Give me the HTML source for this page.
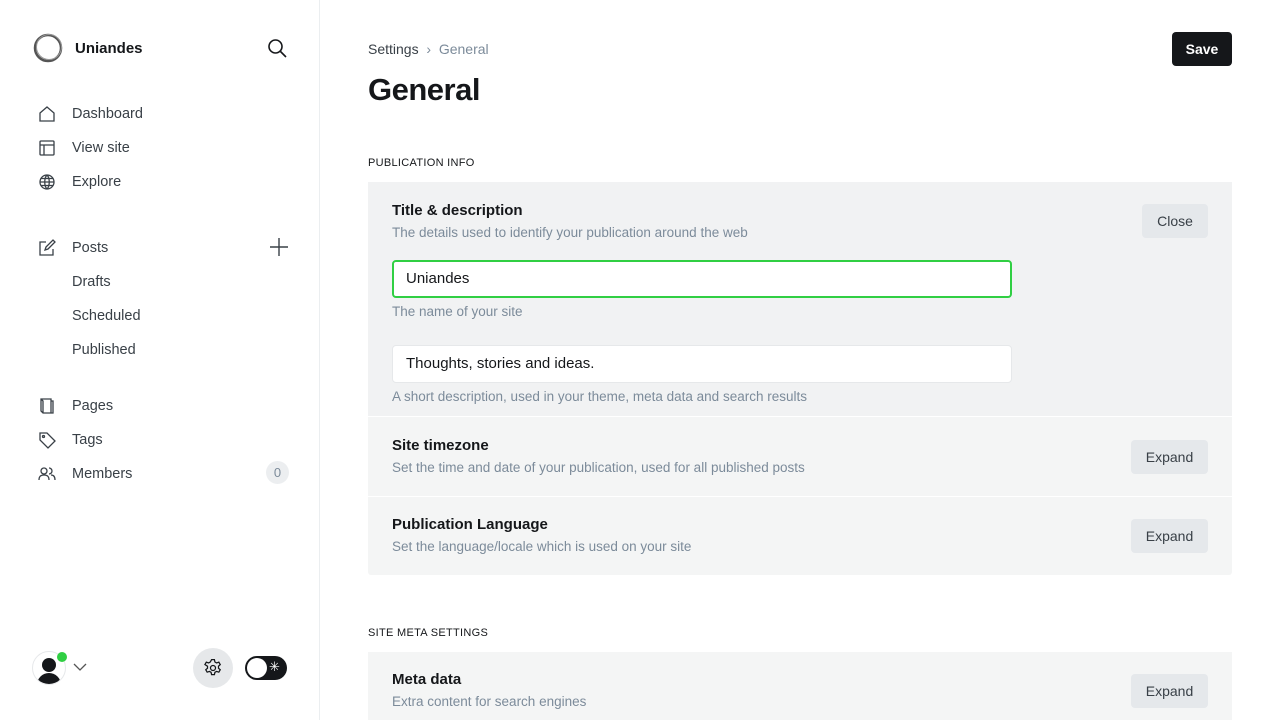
<!DOCTYPE html>
<html><head><meta charset="utf-8">
<style>
*{box-sizing:border-box;margin:0;padding:0}
html,body{width:1280px;height:720px;overflow:hidden}
body{background:#fff;font-family:"Liberation Sans",sans-serif;color:#15171a;position:relative}
.side{position:absolute;left:0;top:0;width:320px;height:720px;border-right:1px solid #ebeef0}
.brand{position:absolute;left:33px;top:33px;display:flex;align-items:center}
.brand span{font-weight:bold;font-size:15px;margin-left:12px}
.nav{position:absolute;left:38px;font-size:14.5px;color:#394047;display:flex;align-items:center}
.nav svg{width:18px;height:18px;margin-right:16px;fill:none;stroke:#394047;stroke-width:1.3}
.sub{position:absolute;left:72px;font-size:14.5px;color:#394047}
.main{position:absolute;left:368px;top:0;width:864px}
.crumb{position:absolute;top:41px;font-size:14px;color:#394047}
.crumb i{font-style:normal;color:#7c8b9a}
h1{position:absolute;top:72px;font-size:31px;font-weight:bold;letter-spacing:-0.5px}
.save{position:absolute;left:804px;top:32px;width:60px;height:34px;background:#15171a;color:#fff;border-radius:4px;font-size:14px;font-weight:bold;text-align:center;line-height:34px}
.sec{position:absolute;font-size:11px;color:#15171a;letter-spacing:0.3px}
.panel{position:absolute;left:0;width:864px;background:#f4f5f5}
.row{position:relative;border-top:1px solid #fff}
.row h3{position:absolute;left:24px;font-size:15px;font-weight:bold;color:#15171a}
.row p{position:absolute;left:24px;font-size:13.5px;color:#7c8b9a}
.btn{position:absolute;right:24px;height:34px;background:#e5e8eb;border-radius:4px;font-size:14px;color:#394047;text-align:center;line-height:34px}
.inp{position:absolute;left:24px;width:620px;height:38px;background:#fff;border-radius:4px;font-size:15px;padding-left:13px;line-height:38px;color:#15171a}
</style></head><body>
<div class="side">
 <div class="brand"><svg width="30" height="30" viewBox="0 0 30 30"><circle cx="15" cy="15" r="13" fill="none" stroke="#555" stroke-width="2.5"/><circle cx="16" cy="14" r="12.5" fill="none" stroke="#999" stroke-width="1"/></svg><span>Uniandes</span></div>
 <svg style="position:absolute;left:267px;top:38px" width="20" height="20" viewBox="0 0 20 20" fill="none" stroke="#15171a" stroke-width="1.6"><circle cx="8.5" cy="8.5" r="6.5"/><path d="M13.5 13.5 19 19"/></svg>
 <div class="nav" style="top:105px"><svg viewBox="0 0 18 18"><path d="M2 8 9 2l7 6v8H2z"/></svg>Dashboard</div>
 <div class="nav" style="top:139px"><svg viewBox="0 0 18 18"><rect x="2" y="2" width="14" height="14" rx="1"/><path d="M2 6h14M6 6v10"/></svg>View site</div>
 <div class="nav" style="top:173px"><svg viewBox="0 0 18 18"><circle cx="9" cy="9" r="7"/><path d="M2 9h14M9 2c-3 3-3 11 0 14M9 2c3 3 3 11 0 14M3 5.5h12M3 12.5h12"/></svg>Explore</div>
 <div class="nav" style="top:239px"><svg viewBox="0 0 18 18"><path d="M8 3H2v13h13v-6M7 11l1-3 7-7 2 2-7 7z"/></svg>Posts</div>
 <svg style="position:absolute;left:270px;top:238px" width="18" height="18" viewBox="0 0 18 18" stroke="#394047" stroke-width="1.4"><path d="M9 0v18M0 9h18"/></svg>
 <div class="sub" style="top:274px">Drafts</div>
 <div class="sub" style="top:308px">Scheduled</div>
 <div class="sub" style="top:342px">Published</div>
 <div class="nav" style="top:397px"><svg viewBox="0 0 18 18"><path d="M3 2h10v14H5l-2-2zM5 16V4l-2-2M13 4h2v12h-2"/></svg>Pages</div>
 <div class="nav" style="top:431px"><svg viewBox="0 0 18 18"><path d="M2 2h7l8 8-7 7-8-8z"/><circle cx="5.5" cy="5.5" r="1"/></svg>Tags</div>
 <div class="nav" style="top:465px"><svg viewBox="0 0 18 18"><circle cx="6" cy="6" r="3"/><path d="M1 15c0-4 2-5 5-5s5 1 5 5M11 3a3 3 0 0 1 0 6M13 10c2 0 4 1 4 5"/></svg>Members</div>
 <div style="position:absolute;left:266px;top:461px;width:23px;height:23px;border-radius:50%;background:#eceef0;color:#7c8b9a;font-size:13px;text-align:center;line-height:23px">0</div>
 <div style="position:absolute;left:32px;top:651px;width:34px;height:34px;border-radius:50%;border:1px solid #e6e8ea;overflow:hidden"><div style="position:absolute;left:9px;top:6px;width:14px;height:14px;border-radius:50%;background:#15171a"></div><div style="position:absolute;left:4px;top:21px;width:24px;height:16px;border-radius:12px 12px 0 0;background:#15171a"></div></div>
 <div style="position:absolute;left:57px;top:652px;width:10px;height:10px;border-radius:50%;background:#30cf43"></div>
 <svg style="position:absolute;left:73px;top:663px" width="14" height="9" viewBox="0 0 14 9" fill="none" stroke="#555" stroke-width="1.3"><path d="M1 1l6 6 6-6"/></svg>
 <div style="position:absolute;left:193px;top:648px;width:40px;height:40px;border-radius:50%;background:#e6e8ea"></div>
 <svg style="position:absolute;left:203px;top:658px" width="20" height="20" viewBox="0 0 24 24" fill="none" stroke="#15171a" stroke-width="1.5"><circle cx="12" cy="12" r="3"/><path d="M10.3 2h3.4l.6 2.8 2 1.1 2.7-.9 1.7 2.9-2.1 1.9v2.4l2.1 1.9-1.7 2.9-2.7-.9-2 1.1-.6 2.8h-3.4l-.6-2.8-2-1.1-2.7.9-1.7-2.9 2.1-1.9v-2.4L2.3 7.9 4 5l2.7.9 2-1.1z"/></svg>
 <div style="position:absolute;left:245px;top:656px;width:42px;height:24px;border-radius:12px;background:#15171a"><div style="position:absolute;left:2px;top:2px;width:20px;height:20px;border-radius:50%;background:#fff"></div><span style="position:absolute;left:24px;top:3px;color:#fff;font-size:13px">✳</span></div>
</div>
<div class="main">
 <div class="crumb">Settings <i>&nbsp;›&nbsp; General</i></div>
 <h1>General</h1>
 <div class="save">Save</div>
 <div class="sec" style="top:157px">PUBLICATION INFO</div>
 <div class="panel" style="top:182px;height:393px;border-radius:3px">
  <div class="row" style="height:234px;border-top:0;background:#f1f2f3">
   <h3 style="top:20px">Title &amp; description</h3>
   <p style="top:43px">The details used to identify your publication around the web</p>
   <div class="btn" style="top:22px;width:66px">Close</div>
   <div class="inp" style="top:78px;border:2px solid #30cf43;line-height:34px;padding-left:12px">Uniandes</div>
   <p style="top:122px">The name of your site</p>
   <div class="inp" style="top:163px;border:1px solid #e6e8ea;line-height:36px">Thoughts, stories and ideas.</div>
   <p style="top:207px">A short description, used in your theme, meta data and search results</p>
  </div>
  <div class="row" style="height:80px">
   <h3 style="top:20px">Site timezone</h3>
   <p style="top:43px">Set the time and date of your publication, used for all published posts</p>
   <div class="btn" style="top:23px;width:77px">Expand</div>
  </div>
  <div class="row" style="height:79px">
   <h3 style="top:19px">Publication Language</h3>
   <p style="top:42px">Set the language/locale which is used on your site</p>
   <div class="btn" style="top:22px;width:77px">Expand</div>
  </div>
 </div>
 <div class="sec" style="top:627px">SITE META SETTINGS</div>
 <div class="panel" style="top:652px;height:68px">
  <div class="row" style="height:68px;border-top:0">
   <h3 style="top:19px">Meta data</h3>
   <p style="top:42px">Extra content for search engines</p>
   <div class="btn" style="top:22px;width:77px">Expand</div>
  </div>
 </div>
</div>
</body></html>
